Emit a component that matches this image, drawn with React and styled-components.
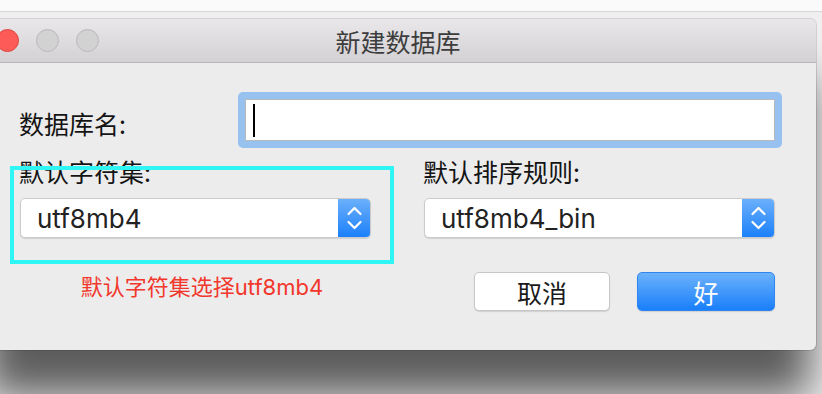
import React from 'react';
import styled, {createGlobalStyle} from 'styled-components';

const Global = createGlobalStyle`
  html, body {
    margin: 0;
    padding: 0;
    overflow: hidden;
    background: #efefef;
  }
`;

const cjk = `"Noto Sans CJK SC", "Noto Sans", sans-serif`;
const latin = `Inter, "Noto Sans CJK SC", sans-serif`;

const Page = styled.div`
  width: 822px;
  height: 394px;
  overflow: hidden;
  display: flex;
  flex-direction: column;
  background: #efefef;
`;

const TopStrip = styled.div`
  height: 11px;
  flex-shrink: 0;
  background: #fafafa;
  border-bottom: 1px solid #d6d6d6;
`;

const Stage = styled.div`
  padding-top: 7px;
`;

const Window = styled.div`
  margin-left: -20px;
  width: 836px;
  height: 331px;
  box-sizing: border-box;
  background: #ececec;
  border-radius: 6px;
  box-shadow: 0 0 0 1px rgba(0, 0, 0, 0.12), 0 52px 40px -6px rgba(0, 0, 0, 0.62);
  display: flex;
  flex-direction: column;
  overflow: hidden;
`;

const TitleBar = styled.div`
  height: 43px;
  flex-shrink: 0;
  display: grid;
  grid-template-columns: 1fr auto 1fr;
  align-items: center;
  background: linear-gradient(#e9e7e9, #d3d1d3);
  border-bottom: 1px solid #b7b7b7;
`;

const Lights = styled.div`
  display: flex;
  gap: 17px;
  padding-left: 16px;
`;

const Light = styled.span`
  width: 21px;
  height: 21px;
  border-radius: 50%;
  background: ${p => p.$color};
  border: 1px solid ${p => p.$edge};
`;

const Title = styled.div`
  font-family: ${cjk};
  font-size: 25px;
  color: #3d3d3d;
  line-height: 30px;
`;

const Body = styled.div`
  padding: 29px 34px 0 39px;
`;

const NameRow = styled.div`
  display: flex;
  align-items: center;
  justify-content: space-between;
`;

const Label = styled.div`
  font-family: ${cjk};
  font-size: 25px;
  line-height: 30px;
  color: #141414;
  padding-top: ${p => p.$nudge || 0}px;
`;

const Ring = styled.div`
  width: 544px;
  height: 56px;
  box-sizing: border-box;
  padding: 7px;
  border-radius: 5px;
  background: #97c2f0;
`;

const NameInput = styled.div`
  height: 100%;
  box-sizing: border-box;
  background: #fff;
  border: 1px solid #b9b9b9;
  display: flex;
  align-items: center;
  padding-left: 7px;
`;

const Caret = styled.span`
  width: 2px;
  height: 33px;
  background: #000;
`;

const Grid = styled.div`
  position: relative;
  margin-top: 8px;
  display: grid;
  grid-template-columns: 352px 352px;
  column-gap: 52px;
  align-items: start;
`;

const Select = styled.div`
  margin-top: 12px;
  height: 40px;
  box-sizing: border-box;
  display: flex;
  align-items: center;
  background: #fff;
  border: 1px solid #cbcbcb;
  border-radius: 5px;
  box-shadow: 0 1px 1px rgba(0, 0, 0, 0.12);
  overflow: hidden;
  margin-left: 1px;
`;

const SelectValue = styled.span`
  flex: 1;
  padding-left: 16px;
  font-family: ${latin};
  font-size: 26px;
  color: #222;
`;

const Stepper = styled.span`
  width: 33px;
  height: 40px;
  margin: -1px -1px -1px 0;
  background: linear-gradient(#6db1fb, #1a7ffa);
  display: flex;
`;

const Note = styled.div`
  margin-top: 36px;
  text-align: center;
  padding-left: 14px;
  font-family: ${latin};
  font-size: 22px;
  line-height: 26px;
  color: #f2372c;
`;

const Actions = styled.div`
  margin-top: 34px;
  display: flex;
  justify-content: flex-end;
  gap: 27px;
`;

const Button = styled.div`
  width: ${p => (p.$primary ? 138 : 136)}px;
  height: 39px;
  box-sizing: border-box;
  border-radius: 5px;
  display: flex;
  align-items: center;
  justify-content: center;
  font-family: ${cjk};
  font-size: 25px;
  color: ${p => (p.$primary ? '#fff' : '#1a1a1a')};
  background: ${p => (p.$primary ? 'linear-gradient(#6cb2fb, #1a7ffb)' : '#fff')};
  border: 1px solid ${p => (p.$primary ? '#2f86f0' : '#c6c6c6')};
  box-shadow: 0 1px 1px rgba(0, 0, 0, 0.12);
`;

const Highlight = styled.div`
  position: absolute;
  left: -9px;
  top: 10px;
  width: 384px;
  height: 98px;
  box-sizing: border-box;
  border: 4px solid #2ff6f4;
  pointer-events: none;
`;

const Chevrons = () => (
  <svg width="33" height="40" viewBox="0 0 33 40">
    <path d="M10.5 16 L16.5 10 L22.5 16" fill="none" stroke="#fff" strokeWidth="2.2" strokeLinecap="round" strokeLinejoin="round"/>
    <path d="M10.5 24 L16.5 30 L22.5 24" fill="none" stroke="#fff" strokeWidth="2.2" strokeLinecap="round" strokeLinejoin="round"/>
  </svg>
);

const Dropdown = ({value}) => (
  <Select>
    <SelectValue>{value}</SelectValue>
    <Stepper><Chevrons/></Stepper>
  </Select>
);

const App = () => (
  <Page>
    <Global/>
    <TopStrip/>
    <Stage>
      <Window>
        <TitleBar>
          <Lights>
            <Light $color="#fc5b57" $edge="#e0443f"/>
            <Light $color="#d2d2d2" $edge="#b9b9b9"/>
            <Light $color="#d2d2d2" $edge="#b9b9b9"/>
          </Lights>
          <Title>新建数据库</Title>
          <div/>
        </TitleBar>
        <Body>
          <NameRow>
            <Label $nudge={6}>数据库名:</Label>
            <Ring>
              <NameInput><Caret/></NameInput>
            </Ring>
          </NameRow>
          <Grid>
            <Label>默认字符集:</Label>
            <Label>默认排序规则:</Label>
            <Dropdown value="utf8mb4"/>
            <Dropdown value="utf8mb4_bin"/>
            <Note>默认字符集选择utf8mb4</Note>
            <Actions>
              <Button>取消</Button>
              <Button $primary>好</Button>
            </Actions>
            <Highlight/>
          </Grid>
        </Body>
      </Window>
    </Stage>
  </Page>
);

export default App;
